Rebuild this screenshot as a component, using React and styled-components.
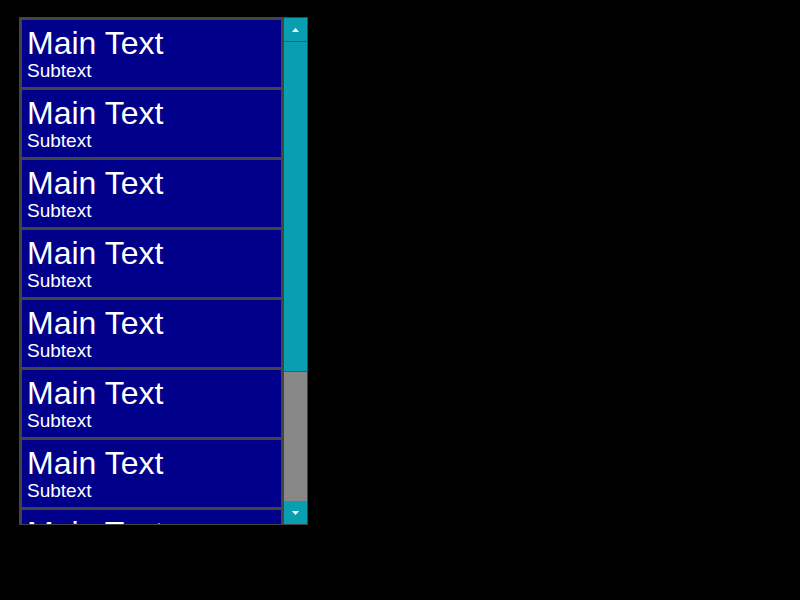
import React from "react";
import styled, { createGlobalStyle } from "styled-components";

const GlobalStyle = createGlobalStyle`
  html, body {
    margin: 0;
    padding: 0;
    background: #000000;
    width: 800px;
    height: 600px;
    overflow: hidden;
  }
`;

const Page = styled.div`
  padding: 17px 0 0 19px;
`;

const Frame = styled.div`
  width: 289px;
  height: 508px;
  box-sizing: border-box;
  border: 1px solid #444444;
  background: #444444;
  display: flex;
  flex-direction: row;
`;

const List = styled.div`
  flex: 1;
  overflow: hidden;
  padding: 2px 3px 0 2px;
  display: flex;
  flex-direction: column;
  gap: 3px;
`;

const Item = styled.div`
  flex: none;
  height: 67px;
  box-sizing: border-box;
  padding: 7px 5px 0;
  background: #00008b;
  color: #ffffff;
  font-family: "Liberation Sans", Arial, sans-serif;
`;

const MainText = styled.div`
  font-size: 32px;
  line-height: 33px;
`;

const SubText = styled.div`
  font-size: 19px;
  line-height: 22px;
`;

const Scrollbar = styled.div`
  width: 23px;
  display: flex;
  flex-direction: column;
  background: #888888;
`;

const ArrowButton = styled.div`
  height: ${props => props.$height}px;
  box-sizing: border-box;
  background: #0a9fb0;
  border-bottom: ${props => (props.$line ? "1px solid #08707c" : "none")};
  display: flex;
  align-items: center;
  justify-content: center;
`;

const Thumb = styled.div`
  height: ${props => props.$height}px;
  box-sizing: border-box;
  background: #0a9fb0;
  border-bottom: 1px solid #08707c;
`;

const Track = styled.div`
  flex: 1;
`;

const Arrow = ({ up }) => (
  <svg width="7" height="4" viewBox="0 0 7 4">
    {up ? (
      <polygon points="3.5,0 7,4 0,4" fill="#ffffff" />
    ) : (
      <polygon points="0,0 7,0 3.5,4" fill="#ffffff" />
    )}
  </svg>
);

const items = Array.from({ length: 8 }, (_, i) => i);

const App = () => (
  <Page>
    <GlobalStyle />
    <Frame>
      <List>
        {items.map(i => (
          <Item key={i}>
            <MainText>Main Text</MainText>
            <SubText>Subtext</SubText>
          </Item>
        ))}
      </List>
      <Scrollbar>
        <ArrowButton $height={24} $line>
          <Arrow up />
        </ArrowButton>
        <Thumb $height={330} />
        <Track />
        <ArrowButton $height={23}>
          <Arrow />
        </ArrowButton>
      </Scrollbar>
    </Frame>
  </Page>
);

export default App;
